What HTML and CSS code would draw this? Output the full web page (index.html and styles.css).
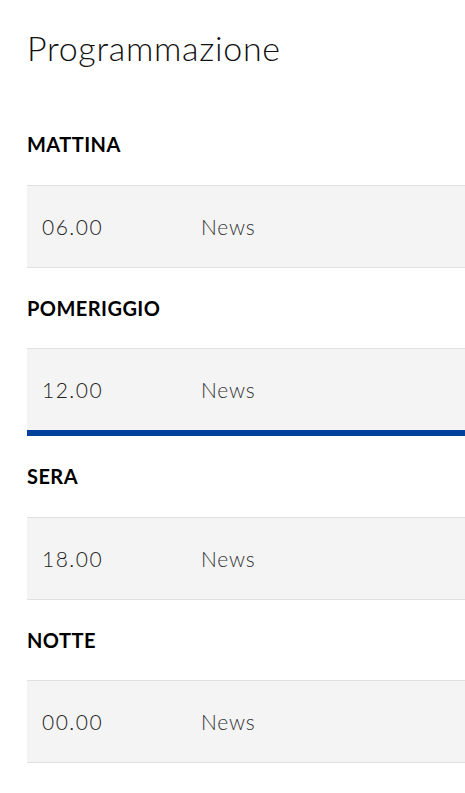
FILE: index.html
```
<!DOCTYPE html>
<html lang="it">
<head>
<meta charset="utf-8">
<title>Programmazione</title>
<link rel="stylesheet" href="styles.css">
</head>
<body>
<main class="schedule">
  <h1 class="title">Programmazione</h1>
  <section class="slot">
    <h2 class="slot-name">MATTINA</h2>
    <div class="row"><span class="time">06.00</span><span class="show">News</span></div>
  </section>
  <section class="slot">
    <h2 class="slot-name">POMERIGGIO</h2>
    <div class="row row-active"><span class="time">12.00</span><span class="show">News</span></div>
  </section>
  <section class="slot">
    <h2 class="slot-name">SERA</h2>
    <div class="row"><span class="time">18.00</span><span class="show">News</span></div>
  </section>
  <section class="slot">
    <h2 class="slot-name">NOTTE</h2>
    <div class="row"><span class="time">00.00</span><span class="show">News</span></div>
  </section>
</main>
</body>
</html>
```
FILE: styles.css
```
html, body {
  margin: 0;
  padding: 0;
  background: #fff;
}
body {
  font-family: Lato, "Open Sans", sans-serif;
  color: #000;
}
.schedule {
  padding: 0 0 0 27px;
}
.title {
  margin: 0;
  height: 104px;
  box-sizing: border-box;
  padding-top: 26px;
  font-size: 34px;
  font-weight: 300;
  line-height: 44px;
  letter-spacing: 0.7px;
  color: #111;
}
.slot-name {
  margin: 0;
  height: 80.5px;
  display: flex;
  align-items: center;
  font-size: 20px;
  font-weight: 700;
  letter-spacing: 0.45px;
  color: #000;
}
.row {
  display: flex;
  align-items: center;
  height: 81px;
  background: #f4f4f4;
  border-top: 1px solid #e0e0e0;
  border-bottom: 1px solid #e0e0e0;
  font-size: 21px;
  font-weight: 300;
  color: #222;
}
.row-active {
  border-bottom: 6px solid #00419b;
}
.time {
  width: 159px;
  padding-left: 15px;
  letter-spacing: 1.5px;
}
.show {
  color: #333;
  letter-spacing: 0.8px;
}
```
